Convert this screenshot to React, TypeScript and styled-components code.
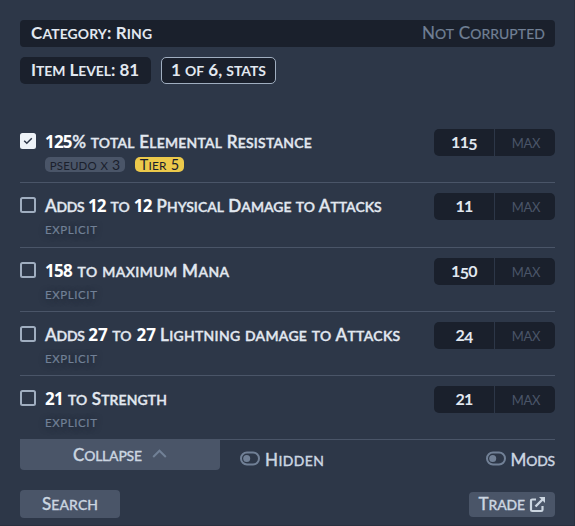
import React from "react";
import styled, { createGlobalStyle } from "styled-components";

const color = {
  page: "#2d3748",
  edge: "#28303f",
  dark: "#1a202c",
  gray: "#4a5568",
  muted: "#718096",
  soft: "#a0aec0",
  label: "#cbd5e0",
  text: "#e2e8f0",
  bright: "#edf2f7",
  yellow: "#ecc94b",
};

const GlobalStyle = createGlobalStyle`
  * { box-sizing: border-box; }
  body {
    margin: 0;
    background: ${color.page};
    font-family: Lato, "Noto Sans", sans-serif;
  }
`;

const Panel = styled.main`
  width: 575px;
  height: 526px;
  padding: 20px 19px 0 20px;
  border-right: 1px solid ${color.edge};
  border-bottom: 1px solid ${color.edge};
  background: ${color.page};
  overflow: hidden;
`;

/* Small-caps text: capitals at full size, lowercase letters as smaller capitals. */
const CapsText = styled.span<{
  $size: number;
  $weight: number;
  $track: number;
  $color: string;
  $stroke: number;
}>`
  font-size: ${(p) => p.$size}px;
  font-weight: ${(p) => p.$weight};
  letter-spacing: ${(p) => p.$track}px;
  color: ${(p) => p.$color};
  -webkit-text-stroke: ${(p) => p.$stroke}px ${(p) => p.$color};
  white-space: pre;
`;
const Lower = styled.span`
  font-size: 0.82em;
  text-transform: uppercase;
`;

type CapsProps = {
  text: string;
  size?: number;
  weight?: number;
  track?: number;
  tone?: string;
  stroke?: number;
};

function Caps({ text, size = 17, weight = 600, track = 0, tone = color.text, stroke = 0 }: CapsProps) {
  return (
    <CapsText $size={size} $weight={weight} $track={track} $color={tone} $stroke={stroke}>
      {text.split(/([a-z]+)/).map((part, i) => (/[a-z]/.test(part) ? <Lower key={i}>{part}</Lower> : part))}
    </CapsText>
  );
}

const CategoryBar = styled.header`
  display: flex;
  justify-content: space-between;
  width: 535px;
  height: 27px;
  padding: 0 10px 0 11px;
  line-height: 26px;
  border-radius: 4px;
  background: ${color.dark};
`;
const TagRow = styled.div`
  display: flex;
  gap: 10px;
  margin-top: 10px;
`;
const Tag = styled.div<{ $width: number; $outlined?: boolean }>`
  width: ${(p) => p.$width}px;
  height: 27px;
  padding-left: ${(p) => (p.$outlined ? 9 : 11)}px;
  line-height: ${(p) => (p.$outlined ? 24 : 26)}px;
  border: ${(p) => (p.$outlined ? `1px solid ${color.soft}` : "0")};
  border-radius: 5px;
  background: ${color.dark};
`;

const StatList = styled.section`
  width: 535px;
  margin-top: 35px;
`;
const StatRow = styled.div<{ $height: number }>`
  display: flex;
  height: ${(p) => p.$height}px;
  border-bottom: 1px solid ${color.gray};
`;
const Check = styled.div<{ $on?: boolean }>`
  display: grid;
  place-items: center;
  width: 16px;
  height: 16px;
  margin-top: 14px;
  border: 2px solid ${(p) => (p.$on ? color.bright : color.soft)};
  border-radius: 2.5px;
  background: ${(p) => (p.$on ? color.bright : "transparent")};
`;
const StatBody = styled.div`
  flex: 1;
  padding: 12px 0 0 9px;
`;
const StatTitle = styled.div`
  height: 22px;
  line-height: 22px;
  white-space: pre;
`;
const Value = styled.b<{ $track: number; $after: number }>`
  margin-right: ${(p) => p.$after}px;
  font: 700 17px/0 "Noto Sans", sans-serif;
  letter-spacing: ${(p) => p.$track}px;
  color: #fff;
`;
const Word = styled.span<{ $after?: number }>`
  margin-right: ${(p) => p.$after ?? 0}px;
`;
const Chips = styled.div`
  display: flex;
  gap: 10px;
  margin-top: 4px;
`;
const Chip = styled.div<{ $width: number; $bg: string }>`
  width: ${(p) => p.$width}px;
  height: 15px;
  line-height: 14px;
  text-align: center;
  border-radius: 5px;
  background: ${(p) => p.$bg};
`;
const Kind = styled.div`
  height: 15px;
  margin-top: -1px;
  line-height: 15px;
  text-shadow: 0 1px 6px rgba(26, 32, 44, 0.75);
`;

const Range = styled.div`
  display: grid;
  grid-template-columns: 60px 60px;
  column-gap: 1px;
  height: 27px;
  margin-top: 10px;
  border-radius: 5px;
  overflow: hidden;
`;
const Field = styled.div`
  text-align: center;
  line-height: 26px;
  font-size: 16px;
  font-weight: 700;
  letter-spacing: -0.7px;
  color: ${color.text};
  background: ${color.dark};
`;
const OldStyle = styled.span`
  position: relative;
  top: 1.5px;
`;
const Placeholder = styled.span`
  padding-left: 2px;
  font-size: 13px;
  font-weight: 400;
  letter-spacing: -0.2px;
  color: ${color.gray};
`;

const Footer = styled.div`
  display: flex;
  width: 535px;
  height: 51px;
`;
const CollapseButton = styled.button`
  display: flex;
  width: 200px;
  height: 31px;
  margin: -1px 0 0;
  padding: 0 0 0 53px;
  border: 0;
  border-radius: 0 0 4px 4px;
  background: ${color.gray};
  font-family: inherit;
  line-height: 31px;
`;
const Toggle = styled.div<{ $left: number | "auto" }>`
  display: flex;
  height: 37px;
  margin-left: ${(p) => (p.$left === "auto" ? "auto" : `${p.$left}px`)};
  line-height: 39px;
`;
const Actions = styled.div`
  display: flex;
  justify-content: space-between;
  width: 535px;
`;
const Button = styled.button<{ $width: number; $height: number; $top: number; $left: number }>`
  display: flex;
  width: ${(p) => p.$width}px;
  height: ${(p) => p.$height}px;
  margin: ${(p) => p.$top}px 0 0;
  padding: 0 0 0 ${(p) => p.$left}px;
  border: 0;
  border-radius: 4px;
  background: ${color.gray};
  font-family: inherit;
  line-height: ${(p) => p.$height - 1}px;
`;
const Icon = styled.svg<{ $m: string }>`
  flex: none;
  margin: ${(p) => p.$m};
`;

function ToggleIcon() {
  return (
    <Icon $m="11px 5px 0 0" width="20" height="15" viewBox="0 0 20 15">
      <rect x="1" y="1.5" width="18" height="12" rx="6" fill="none" stroke={color.muted} strokeWidth="2" />
      <circle cx="6.7" cy="7.5" r="3.5" fill={color.muted} />
    </Icon>
  );
}

type Piece = { value?: string; text?: string; track?: number; after?: number };
type Stat = { pieces: Piece[]; min: string; height: number; pseudo?: boolean };

const stats: Stat[] = [
  {
    pieces: [{ value: "125", track: -0.8, after: 0.4 }, { text: "% total Elemental Resistance", track: 0.24 }],
    min: "115",
    height: 64,
    pseudo: true,
  },
  {
    pieces: [
      { text: "Adds", track: -0.3, after: 3.6 },
      { value: "12", track: -0.8, after: 4.8 },
      { text: "to", track: 0.1, after: 4 },
      { value: "12", track: -0.8, after: 4.8 },
      { text: "Physical Damage to Attacks", track: 0.03 },
    ],
    min: "11",
    height: 65,
  },
  {
    pieces: [{ value: "158", track: -0.7, after: 5.5 }, { text: "to maximum Mana", track: 0.42 }],
    min: "150",
    height: 64,
  },
  {
    pieces: [
      { text: "Adds", track: -0.2, after: 3.6 },
      { value: "27", track: 0, after: 4.6 },
      { text: "to", track: 0.1, after: 4.8 },
      { value: "27", track: 0, after: 4.2 },
      { text: "Lightning damage to Attacks", track: 0.31 },
    ],
    min: "24",
    height: 64,
  },
  {
    pieces: [{ value: "21", track: -0.7, after: 5 }, { text: "to Strength", track: 0.12 }],
    min: "21",
    height: 64,
  },
];

function StatLine({ stat }: { stat: Stat }) {
  return (
    <StatRow $height={stat.height}>
      <Check $on={stat.pseudo}>
        {stat.pseudo && (
          <svg width="10" height="8" viewBox="0 0 10 8" fill="none" stroke={color.page} strokeWidth="1.5">
            <path d="M1.2 3.7 3.8 6.2 8.8 1.3" />
          </svg>
        )}
      </Check>
      <StatBody>
        <StatTitle>
          {stat.pieces.map((p, i) =>
            p.value ? (
              <Value key={i} $track={p.track ?? 0} $after={p.after ?? 0}>
                {p.value}
              </Value>
            ) : (
              <Word key={i} $after={p.after}>
                <Caps text={p.text ?? ""} track={p.track} stroke={0.35} />
              </Word>
            )
          )}
        </StatTitle>
        <Chips>
          {stat.pseudo ? (
            <>
              <Chip $width={80} $bg={color.gray}>
                <Caps text="pseudo x 3" size={14} weight={400} track={0.17} tone={color.dark} />
              </Chip>
              <Chip $width={49} $bg={color.yellow}>
                <Caps text="Tier 5" size={14.5} weight={400} track={0.2} tone={color.dark} />
              </Chip>
            </>
          ) : (
            <Kind>
              <Caps text="explicit" size={14} weight={400} track={0.6} tone={color.muted} stroke={0.2} />
            </Kind>
          )}
        </Chips>
      </StatBody>
      <Range>
        <Field>
          {stat.min.split("").map((d, i) => (/[45]/.test(d) ? <OldStyle key={i}>{d}</OldStyle> : d))}
        </Field>
        <Field>
          <Placeholder>MAX</Placeholder>
        </Field>
      </Range>
    </StatRow>
  );
}

export default function App() {
  return (
    <>
      <GlobalStyle />
      <Panel>
        <CategoryBar>
          <Caps text="Category: Ring" weight={700} track={0.12} />
          <Caps text="Not Corrupted" weight={400} track={0.1} tone={color.muted} stroke={0.2} />
        </CategoryBar>
        <TagRow>
          <Tag $width={131}>
            <Caps text="Item Level: 81" weight={700} track={-0.05} />
          </Tag>
          <Tag $width={115} $outlined>
            <Caps text="1 of 6, stats" weight={700} />
          </Tag>
        </TagRow>
        <StatList>
          {stats.map((s, i) => (
            <StatLine key={i} stat={s} />
          ))}
        </StatList>
        <Footer>
          <CollapseButton>
            <Caps text="Collapse" weight={500} track={-0.2} tone={color.label} stroke={0.3} />
            <Icon $m="9px 0 0 10px" width="15" height="11" viewBox="0 0 15 11">
              <path d="M1.2 9 7.5 2.7 13.8 9" fill="none" stroke={color.muted} strokeWidth="2" />
            </Icon>
          </CollapseButton>
          <Toggle $left={20}>
            <ToggleIcon />
            <Caps text="Hidden" weight={500} track={0.4} tone={color.label} stroke={0.3} />
          </Toggle>
          <Toggle $left="auto">
            <ToggleIcon />
            <Caps text="Mods" weight={500} track={-0.2} tone={color.label} stroke={0.3} />
          </Toggle>
        </Footer>
        <Actions>
          <Button $width={100} $height={28} $top={-1} $left={22}>
            <Caps text="Search" weight={500} track={0.1} tone={color.label} stroke={0.3} />
          </Button>
          <Button $width={86} $height={25} $top={1} $left={9.5}>
            <Caps text="Trade" weight={500} track={-0.1} tone={color.label} stroke={0.3} />
            <Icon $m="4px 0 0 4px" width="17" height="17" viewBox="0 0 17 17" fill="none" stroke={color.label}>
              <path d="M7 3.5H3.3Q2 3.5 2 4.8V13.7Q2 15 3.3 15H12.2Q13.5 15 13.5 13.7V10" strokeWidth="2.2" />
              <path d="M6.5 10.5 14 3" strokeWidth="2.4" />
              <path d="M10 1H16V7Z" fill={color.label} stroke="none" />
            </Icon>
          </Button>
        </Actions>
      </Panel>
    </>
  );
}
